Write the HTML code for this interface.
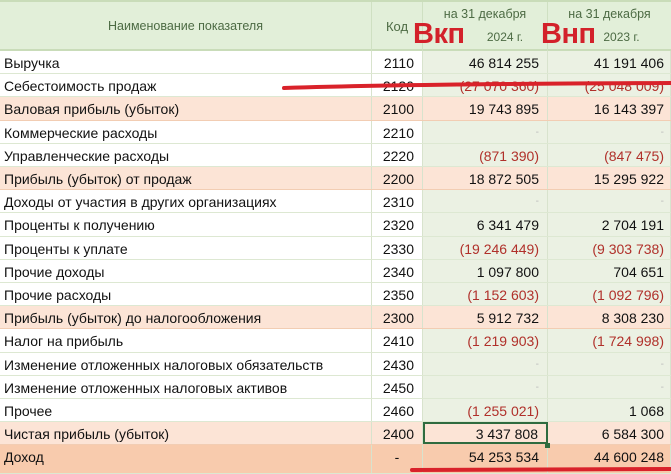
<!DOCTYPE html>
<html><head><meta charset="utf-8"><style>
*{margin:0;padding:0;box-sizing:border-box}
body{width:671px;height:474px;overflow:hidden;background:#fff;font-family:"Liberation Sans",sans-serif;position:relative}
.hdr{position:absolute;left:0;top:0;width:671px;height:51px;background:#e2efd9;border-top:2px solid #c9dcb9;border-bottom:2px solid #c9dcb9}
.hc{position:absolute;top:0;height:49px;border-right:1px solid #cfe0c2;color:#4d6b44;font-size:13px}
.row{position:absolute;left:0;width:671px;height:23.2px;border-bottom:1px solid #dde8d2;font-size:14px;color:#111}
.row div{position:absolute;top:0;height:100%;line-height:24px;border-right:1px solid #d8e3cd}
.n{left:0;width:372px;padding-left:4px;background:#fff}
.c{left:372px;width:51px;text-align:right;padding-right:8px;background:#fff}
.v1{left:423px;width:125px;text-align:right;padding-right:8px;background:#ebf1e3}
.v2{left:548px;width:123px;text-align:right;padding-right:6px;background:#ebf1e3}
.hl div{background:#fce4d6!important}
.hl{border-bottom:1px solid #f2cdb3}
.last div{background:#f8cbad!important}
.r{color:#b0302a}
.d{color:#bbb;font-size:10px}
</style></head><body>
<div class="hdr">
<div class="hc" style="left:0;width:372px;line-height:49px;text-align:center;font-size:12.5px">Наименование показателя</div>
<div class="hc" style="left:372px;width:51px;line-height:49px;text-align:center;font-size:13px">Код</div>
<div class="hc" style="left:423px;width:125px;text-align:center;font-size:12.5px"><div style="margin-top:5px">на 31 декабря</div><div style="margin-top:9px;padding-left:40px;font-size:12px">2024 г.</div></div>
<div class="hc" style="left:548px;width:123px;text-align:center;font-size:12.5px;border-right:none"><div style="margin-top:5px">на 31 декабря</div><div style="margin-top:9px;padding-left:24px;font-size:12px">2023 г.</div></div>
<div style="position:absolute;left:413px;top:16px;color:#d3212a;font-weight:bold;font-size:29px;letter-spacing:-0.5px">Вкп</div>
<div style="position:absolute;left:541px;top:16px;color:#d3212a;font-weight:bold;font-size:29px;letter-spacing:-0.5px">Внп</div>
</div>

<div class="row" style="top:51px"><div class="n">Выручка</div><div class="c">2110</div><div class="v1">46 814 255</div><div class="v2">41 191 406</div></div>
<div class="row" style="top:74.2px"><div class="n">Себестоимость продаж</div><div class="c">2120</div><div class="v1 r">(27 070 360)</div><div class="v2 r">(25 048 009)</div></div>
<div class="row hl" style="top:97.4px"><div class="n">Валовая прибыль (убыток)</div><div class="c">2100</div><div class="v1">19 743 895</div><div class="v2">16 143 397</div></div>
<div class="row" style="top:120.6px"><div class="n">Коммерческие расходы</div><div class="c">2210</div><div class="v1 d">-</div><div class="v2 d">-</div></div>
<div class="row" style="top:143.8px"><div class="n">Управленческие расходы</div><div class="c">2220</div><div class="v1 r">(871 390)</div><div class="v2 r">(847 475)</div></div>
<div class="row hl" style="top:167px"><div class="n">Прибыль (убыток) от продаж</div><div class="c">2200</div><div class="v1">18 872 505</div><div class="v2">15 295 922</div></div>
<div class="row" style="top:190.2px"><div class="n">Доходы от участия в других организациях</div><div class="c">2310</div><div class="v1 d">-</div><div class="v2 d">-</div></div>
<div class="row" style="top:213.4px"><div class="n">Проценты к получению</div><div class="c">2320</div><div class="v1">6 341 479</div><div class="v2">2 704 191</div></div>
<div class="row" style="top:236.6px"><div class="n">Проценты к уплате</div><div class="c">2330</div><div class="v1 r">(19 246 449)</div><div class="v2 r">(9 303 738)</div></div>
<div class="row" style="top:259.8px"><div class="n">Прочие доходы</div><div class="c">2340</div><div class="v1">1 097 800</div><div class="v2">704 651</div></div>
<div class="row" style="top:283px"><div class="n">Прочие расходы</div><div class="c">2350</div><div class="v1 r">(1 152 603)</div><div class="v2 r">(1 092 796)</div></div>
<div class="row hl" style="top:306.2px"><div class="n">Прибыль (убыток) до налогообложения</div><div class="c">2300</div><div class="v1">5 912 732</div><div class="v2">8 308 230</div></div>
<div class="row" style="top:329.4px"><div class="n">Налог на прибыль</div><div class="c">2410</div><div class="v1 r">(1 219 903)</div><div class="v2 r">(1 724 998)</div></div>
<div class="row" style="top:352.6px"><div class="n">Изменение отложенных налоговых обязательств</div><div class="c">2430</div><div class="v1 d">-</div><div class="v2 d">-</div></div>
<div class="row" style="top:375.8px"><div class="n">Изменение отложенных налоговых активов</div><div class="c">2450</div><div class="v1 d">-</div><div class="v2 d">-</div></div>
<div class="row" style="top:399px"><div class="n">Прочее</div><div class="c">2460</div><div class="v1 r">(1 255 021)</div><div class="v2">1 068</div></div>
<div class="row hl" style="top:422.2px"><div class="n">Чистая прибыль (убыток)</div><div class="c">2400</div><div class="v1" style="border:2px solid #2f6b3f;line-height:21px">3 437 808</div><div class="v2">6 584 300</div></div>
<div class="row last" style="top:445.4px;height:28.6px"><div class="n">Доход</div><div class="c" style="text-align:center;padding-left:8px">-</div><div class="v1">54 253 534</div><div class="v2">44 600 248</div></div>
<div style="position:absolute;left:545px;top:443px;width:5px;height:5px;background:#2f6b3f"></div>

<svg style="position:absolute;left:0;top:0" width="671" height="474">
<path d="M284 88 Q400 84 671 83" stroke="#d9222a" stroke-width="4" fill="none" stroke-linecap="round"/>
<path d="M412 470 L671 469" stroke="#d9222a" stroke-width="4" fill="none" stroke-linecap="round"/>
</svg>
</body></html>
